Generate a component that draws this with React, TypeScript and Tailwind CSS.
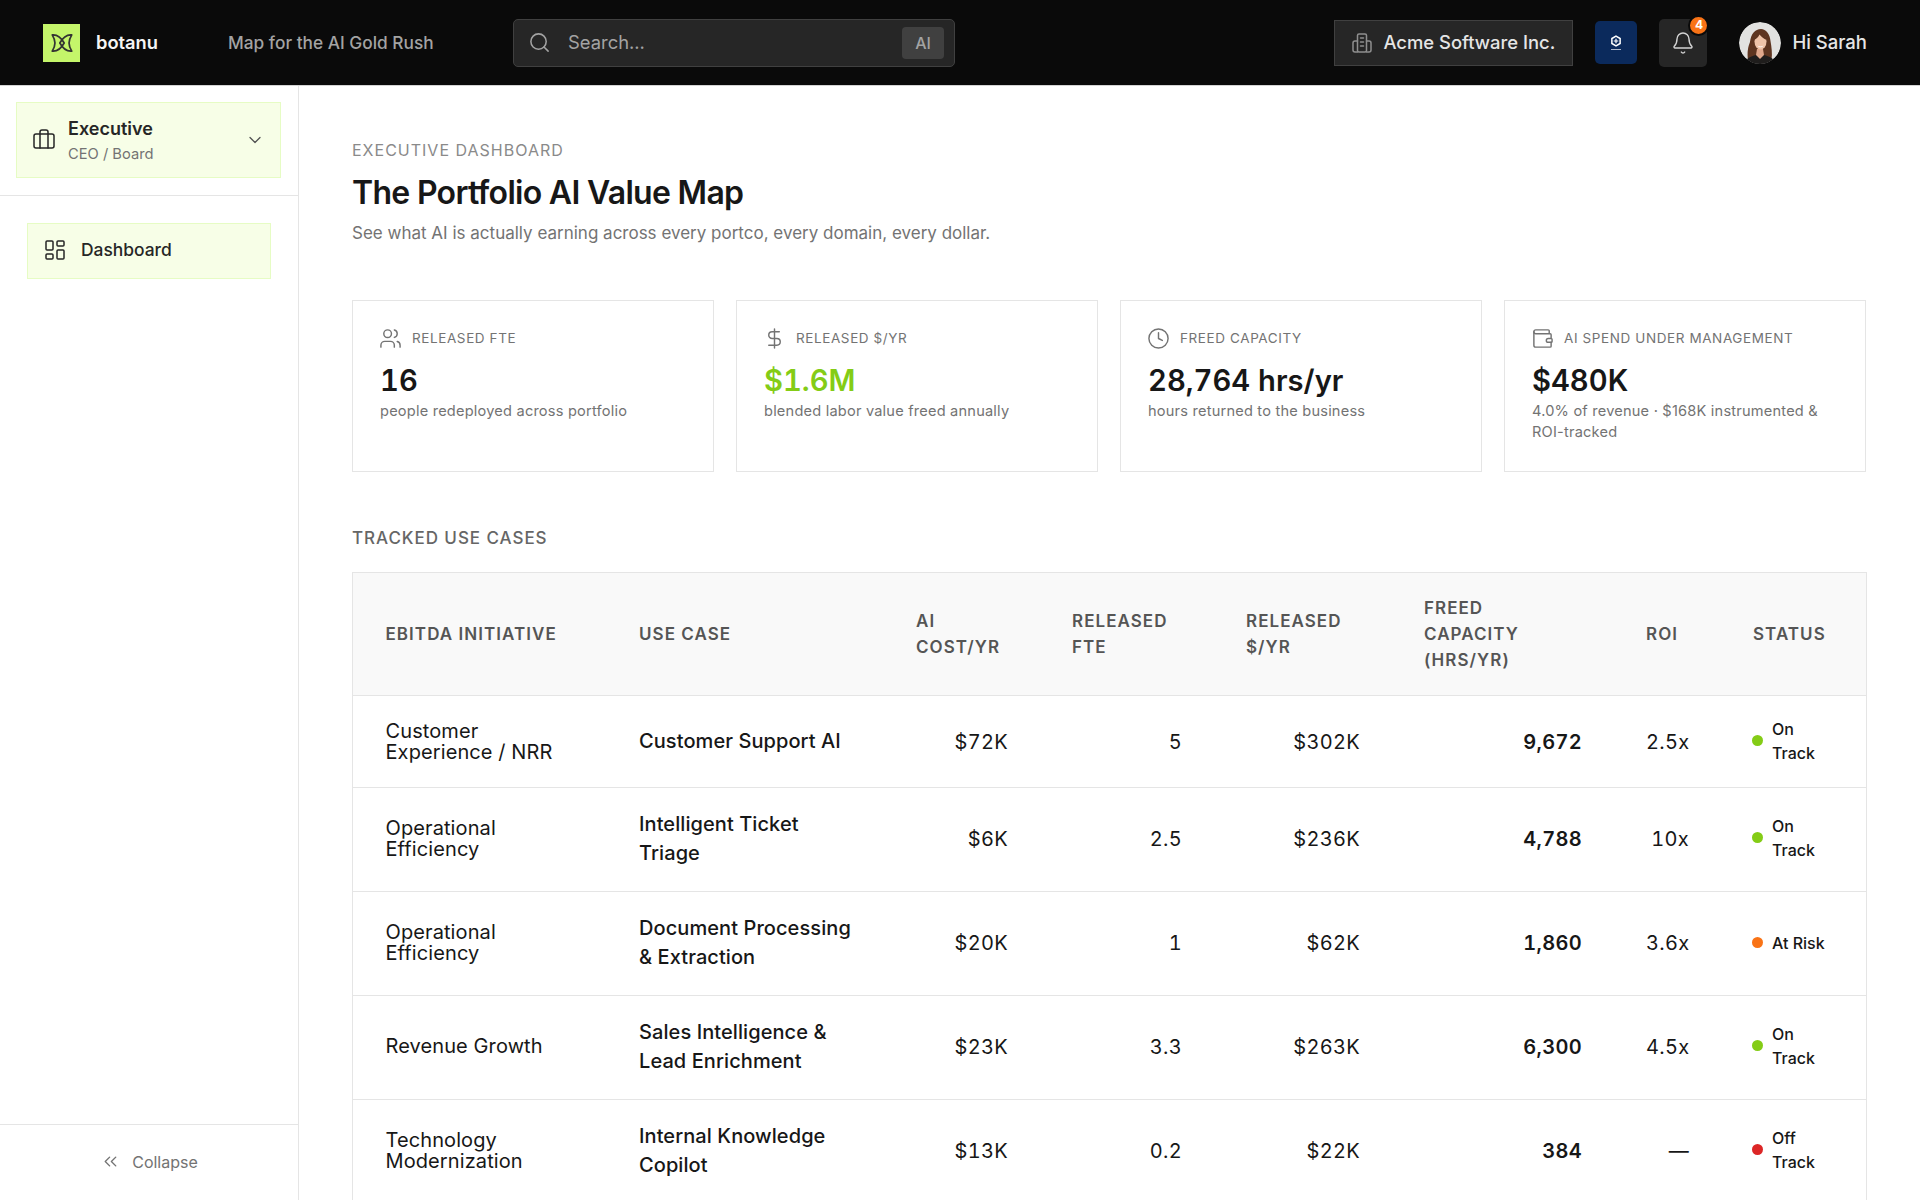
import { Bell, Briefcase, ChevronDown, ChevronsLeft, Clock, DollarSign, LayoutDashboard, Search, Users, Wallet } from 'lucide-react';

const stats = [
  { icon: Users, label: 'RELEASED FTE', value: '16', note: 'people redeployed across portfolio', valueClass: 'text-[#171717]' },
  { icon: DollarSign, label: 'RELEASED $/YR', value: '$1.6M', note: 'blended labor value freed annually', valueClass: 'text-[#84cc16]' },
  { icon: Clock, label: 'FREED CAPACITY', value: '28,764 hrs/yr', note: 'hours returned to the business', valueClass: 'text-[#171717]' },
  { icon: Wallet, label: 'AI SPEND UNDER MANAGEMENT', value: '$480K', note: '4.0% of revenue · $168K instrumented & ROI-tracked', valueClass: 'text-[#171717]' },
];

const rows = [
  { initiative: 'Customer Experience / NRR', useCase: 'Customer Support AI', cost: '$72K', fte: '5', released: '$302K', freed: '9,672', roi: '2.5x', status: 'On Track', dot: 'bg-[#84cc16]', h: 'h-[92px]' },
  { initiative: 'Operational Efficiency', useCase: 'Intelligent Ticket Triage', cost: '$6K', fte: '2.5', released: '$236K', freed: '4,788', roi: '10x', status: 'On Track', dot: 'bg-[#84cc16]', h: 'h-[104px] [&>td]:pb-[2px] [&>td:last-child]:pb-[4px]' },
  { initiative: 'Operational Efficiency', useCase: 'Document Processing & Extraction', cost: '$20K', fte: '1', released: '$62K', freed: '1,860', roi: '3.6x', status: 'At Risk', dot: 'bg-[#f97316]', h: 'h-[104px] [&>td]:pb-[2px]' },
  { initiative: 'Revenue Growth', useCase: 'Sales Intelligence & Lead Enrichment', cost: '$23K', fte: '3.3', released: '$263K', freed: '6,300', roi: '4.5x', status: 'On Track', dot: 'bg-[#84cc16]', h: 'h-[104px] [&>td]:pb-[2px] [&>td:last-child]:pb-[4px]' },
  { initiative: 'Technology Modernization', useCase: 'Internal Knowledge Copilot', cost: '$13K', fte: '0.2', released: '$22K', freed: '384', roi: '—', status: 'Off Track', dot: 'bg-[#dc2626]', h: 'h-[104px] [&>td]:pb-[2px] [&>td:last-child]:pb-[4px]' },
];

const headers = [
  { label: 'EBITDA INITIATIVE', width: 'w-[254px]', pad: 'pl-[32.500px] pr-[24px]' },
  { label: 'USE CASE', width: 'w-[277px]', pad: 'px-[32px]' },
  { label: 'AI COST/YR', width: 'w-[156px]', pad: 'px-[32px]' },
  { label: 'RELEASED FTE', width: 'w-[174px]', pad: 'px-[32px]' },
  { label: 'RELEASED $/YR', width: 'w-[178px]', pad: 'px-[32px]' },
  { label: 'FREED CAPACITY (HRS/YR)', width: 'w-[222px]', pad: 'px-[32px]' },
  { label: 'ROI', width: 'w-[107px]', pad: 'px-[32px]' },
  { label: 'STATUS', width: 'w-[145px]', pad: 'px-[32px]' },
];

const numCell = 'border-b border-[#e5e5e5] px-[32px] text-right text-[20px] tabular-nums tracking-[0.3px] text-[#171717]';

const BotanuMark = () => (
  <svg viewBox="0 0 24 24" className="h-[26px] w-[26px]" fill="none" stroke="#333333" strokeWidth="1.6" strokeLinejoin="round" strokeLinecap="round">
    <path d="M3 4.500C7.500 4 11.500 7.500 14 12 11.500 16.500 7.500 20 3 19.500 4.500 17 5.500 14.500 5.500 12S4.500 7 3 4.500Z" />
    <path d="M21 4.500C16.500 4 12.500 7.500 10 12 12.500 16.500 16.500 20 21 19.500 19.500 17 18.500 14.500 18.500 12S19.500 7 21 4.500Z" />
  </svg>
);

const OfficeIcon = () => (
  <svg viewBox="0 0 20 20" className="h-[20px] w-[20px]" fill="none" stroke="#8f8f8f" strokeWidth="1.500" strokeLinejoin="round" strokeLinecap="round">
    <rect x="5.500" y="1" width="9" height="18" rx="1.500" />
    <path d="M5.500 8H3a2 2 0 0 0-2 2v7a2 2 0 0 0 2 2h2.500M14.500 8H17a2 2 0 0 1 2 2v7a2 2 0 0 1-2 2h-2.500" />
    <path d="M8.500 5h3M8.500 9h3M8.500 13h3" />
  </svg>
);

const Portrait = () => (
  <svg viewBox="0 0 42 42" className="h-[42px] w-[42px] rounded-full">
    <circle cx="21" cy="21" r="21" fill="#e2e2e0" />
    <path d="M9 38c-1-8 0-13 2-18 1-8 5-13 11-13 5 0 9 5 9.500 12 1 6 2 12 1 19Z" fill="#5e3520" />
    <path d="M5 42c1-5 7-8 12-9h8c5 1 11 4 12 9Z" fill="#1f1d1c" />
    <path d="M18 27h6l1 6-4 4-4-4Z" fill="#e0a88c" />
    <ellipse cx="21.500" cy="19.500" rx="6" ry="8" fill="#efc3a8" />
    <path d="M15 18c1-5 3.500-7.500 7-7.500 3 0 5 2.500 5.500 7.500-2.500-1-5-3-7-5.500-1 2.500-3 4.500-5.500 5.500Z" fill="#5e3520" />
    <path d="M18.500 23.500c2 1.200 4 1.200 6 0-1 2.400-5 2.400-6 0Z" fill="#fff" />
  </svg>
);

const App = () => {
  return (
    <div className="flex h-screen flex-col overflow-hidden bg-white font-['Inter',sans-serif] text-[#171717]">
      <header className="flex h-[86px] shrink-0 items-center border-b border-[#d4d4d4] bg-[#0a0a0a] pl-[43px] pr-[53px]">
        <div className="flex h-[38px] w-[37px] items-center justify-center bg-[#c4f56a]">
          <BotanuMark />
        </div>
        <span className="ml-[16px] w-[132px] text-[18.300px] font-semibold text-[#f5f5f5]">botanu</span>
        <span className="w-[285px] text-[17.300px] font-medium text-[#a3a3a3]">Map for the AI Gold Rush</span>
        <div className="flex h-[48px] w-[442px] items-center rounded-[5px] border border-[#404040] bg-[#262626] pl-[14px] pr-[10px]">
          <Search className="h-[23px] w-[23px] text-[#a3a3a3]" strokeWidth={1.6} />
          <span className="ml-[17px] flex-1 text-[18.400px] text-[#a3a3a3]">Search...</span>
          <span className="flex h-[32px] w-[42px] items-center justify-center rounded-[4px] bg-[#404040] text-[16px] font-medium text-[#a3a3a3]">AI</span>
        </div>
        <div className="ml-auto flex h-[46px] w-[239px] items-center border border-[#404040] bg-[#262626] pl-[17px]">
          <OfficeIcon />
          <span className="ml-[11px] text-[18.400px] font-medium text-[#e5e5e5]">Acme Software Inc.</span>
        </div>
        <div className="ml-[22px] flex h-[43px] w-[42px] flex-col items-center justify-center rounded-[5px] bg-[#0b2a5c]">
          <svg viewBox="0 0 16 16" className="h-[12px] w-[12px]" fill="none" stroke="#fff" strokeWidth="2">
            <path d="M8 1.500 13.500 4.700v6.600L8 14.500 2.500 11.300V4.700Z" />
            <path d="M8 5v6M5 8h6" strokeWidth="1.600" />
          </svg>
          <span className="mt-[2px] h-[1px] w-[10px] bg-[#aeb9cc]" />
        </div>
        <div className="relative ml-[22px] flex h-[48px] w-[48px] items-center justify-center rounded-[5px] bg-[#262626]">
          <Bell className="h-[24px] w-[24px] text-[#d4d4d4]" strokeWidth={1.4} />
          <span className="absolute -right-[2px] -top-[4px] flex h-[21px] w-[21px] items-center justify-center rounded-full border-2 border-[#0a0a0a] bg-[#f97316] text-[12px] font-bold text-white">4</span>
        </div>
        <div className="ml-[32px] flex items-center gap-[11px]">
          <Portrait />
          <span className="text-[18.500px] font-medium text-[#e5e5e5]">Hi Sarah</span>
        </div>
      </header>

      <div className="flex min-h-0 flex-1">
        <aside className="flex w-[299px] shrink-0 flex-col border-r border-[#e5e5e5]">
          <div className="border-b border-[#e5e5e5] pb-[17px] pl-[16px] pr-[17px] pt-[16px]">
            <div className="flex h-[76px] items-center border border-[#e6fcc4] bg-[#f7fee7] pl-[15px] pr-[15px]">
              <Briefcase className="h-[24px] w-[24px] text-[#262626]" strokeWidth={1.5} />
              <div className="ml-[12px] flex-1">
                <div className="text-[18px] font-semibold leading-[26px] text-[#262626]">Executive</div>
                <div className="mt-[1px] text-[14.700px] leading-[22px] text-[#737373]">CEO / Board</div>
              </div>
              <ChevronDown className="h-[20px] w-[20px] text-[#525252]" strokeWidth={1.5} />
            </div>
          </div>
          <nav className="flex-1 px-[27px] pt-[27px]">
            <div className="flex h-[56px] items-center border border-[#e6fcc4] bg-[#f7fee7] pb-[2px] pl-[15px]">
              <LayoutDashboard className="h-[24px] w-[24px] text-[#262626]" strokeWidth={1.5} />
              <span className="ml-[14px] text-[17.400px] font-medium text-[#262626]">Dashboard</span>
            </div>
          </nav>
          <div className="flex h-[76px] items-center justify-center gap-[11px] border-t border-[#e5e5e5] pb-[2px] text-[#737373]">
            <ChevronsLeft className="h-[21px] w-[21px]" strokeWidth={1.6} />
            <span className="text-[16px]">Collapse</span>
          </div>
        </aside>

        <main className="min-w-0 flex-1 overflow-hidden pl-[53px] pr-[54px] pt-[53px]">
          <div className="text-[16px] leading-[22px] tracking-[1px] text-[#8a8a8a]">EXECUTIVE DASHBOARD</div>
          <h1 className="mt-[11px] text-[32px] font-semibold leading-[42px] tracking-[-0.7px] text-[#171717]">The Portfolio AI Value Map</h1>
          <p className="mt-[6px] text-[17px] leading-[26px] text-[#737373]">See what AI is actually earning across every portco, every domain, every dollar.</p>

          <div className="mt-[54px] grid grid-cols-4 gap-[22px]">
            {stats.map((s) => (
              <div key={s.label} className="h-[172px] border border-[#e5e5e5] px-[27px] pt-[26px]">
                <div className="flex h-[22px] items-center text-[#737373]">
                  <s.icon className="-ml-[1px] h-[23px] w-[23px]" strokeWidth={1.5} />
                  <span className="ml-[10px] text-[13.500px] tracking-[0.6px]">{s.label}</span>
                </div>
                <div className={`mt-[11px] text-[29.200px] font-semibold leading-[42px] tabular-nums ${s.valueClass}`}>{s.value}</div>
                <div className="-mt-[1px] text-[14.600px] leading-[21px] tracking-[0.2px] text-[#737373]">{s.note}</div>
              </div>
            ))}
          </div>

          <h2 className="mt-[54px] text-[17px] font-medium leading-[24px] tracking-[0.95px] text-[#666666]">TRACKED USE CASES</h2>

          <table className="mt-[22px] w-full table-fixed border-separate border-spacing-0 border-x border-t border-[#e5e5e5]">
            <colgroup>
              {headers.map((h) => (
                <col key={h.label} className={h.width} />
              ))}
            </colgroup>
            <thead>
              <tr className="h-[123px] bg-[#f9f9f9]">
                {headers.map((h) => (
                  <th key={h.label} className={`border-b border-[#e5e5e5] text-left text-[17px] font-semibold leading-[26px] tracking-[1.05px] text-[#555555] ${h.pad}`}>
                    {h.label}
                  </th>
                ))}
              </tr>
            </thead>
            <tbody>
              {rows.map((r) => (
                <tr key={r.useCase} className={r.h}>
                  <td className="border-b border-[#e5e5e5] pl-[32.500px] pr-[31px] text-[20px] leading-[21px] tracking-[0.1px] text-[#171717]">{r.initiative}</td>
                  <td className="border-b border-[#e5e5e5] px-[32px] text-[20px] font-medium leading-[29px] tracking-[0.08px] text-[#171717]">{r.useCase}</td>
                  <td className={numCell}>{r.cost}</td>
                  <td className={numCell}>{r.fte}</td>
                  <td className={numCell}>{r.released}</td>
                  <td className={`${numCell} font-semibold`}>{r.freed}</td>
                  <td className={numCell}>{r.roi}</td>
                  <td className="border-b border-[#e5e5e5] pb-[2px] pl-[31px] pr-[32px]">
                    <div className="flex items-center gap-[9px]">
                      <span className={`h-[11px] w-[11px] shrink-0 rounded-full ${r.dot}`} />
                      <span className="text-[16px] font-medium leading-[24px] text-[#171717]">{r.status}</span>
                    </div>
                  </td>
                </tr>
              ))}
            </tbody>
          </table>
        </main>
      </div>
    </div>
  );
};

export default App;
